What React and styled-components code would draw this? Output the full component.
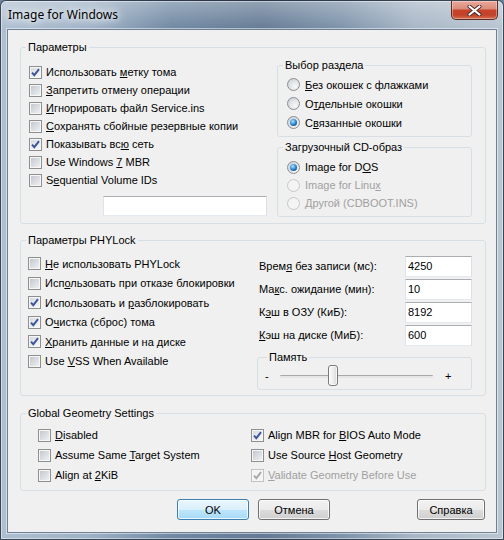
import React from "react";
import styled, { createGlobalStyle } from "styled-components";

const GlobalStyle = createGlobalStyle`
  html, body {
    margin: 0;
    padding: 0;
    background: #70859d;
  }
  body {
    font-family: "Liberation Sans", Arial, sans-serif;
    font-size: 11px;
    color: #000;
  }
`;

const Window = styled.div`
  width: 504px;
  height: 540px;
  box-sizing: border-box;
  display: flex;
  flex-direction: column;
  border: 1px solid rgba(28, 38, 52, 0.8);
  border-radius: 6px 6px 0 0;
  overflow: hidden;
  background:
    linear-gradient(180deg, rgba(255, 255, 255, 0.3) 0, rgba(255, 255, 255, 0) 28px),
    linear-gradient(90deg, #aebfd2 0%, #9db1c6 18%, #7189a3 34%, #657b95 52%, #7e94ab 68%, #a7b6c6 82%, #b9c5d2 100%);
  box-shadow: inset 0 0 0 1px rgba(255, 255, 255, 0.45);
`;

const TitleBar = styled.div`
  flex: none;
  height: 28px;
  display: flex;
  align-items: flex-start;
  justify-content: space-between;
  padding: 0 5px 0 7px;
`;

const Title = styled.div`
  margin-top: 6px;
  font-family: "Noto Sans", "Open Sans", sans-serif;
  font-size: 12px;
  line-height: 16px;
  color: #000;
  text-shadow: 0 0 6px #fff, 0 0 12px #fff, 0 0 18px rgba(255, 255, 255, 0.8);
`;

const CloseButton = styled.div`
  width: 47px;
  height: 19px;
  box-sizing: border-box;
  border: 1px solid #5c2d27;
  border-top: none;
  border-radius: 0 0 5px 5px;
  background: linear-gradient(#e9a99b 0%, #dc8c7b 42%, #c7432b 52%, #c24229 78%, #d56d50 100%);
  box-shadow: inset 0 0 0 1px rgba(255, 255, 255, 0.35);
  display: flex;
  align-items: center;
  justify-content: center;
`;

const Client = styled.div`
  flex: 1;
  margin: 0 6px 6px;
  display: flex;
  flex-direction: column;
  padding: 0 10px 0 12px;
  background: #f0f0f0;
  border: 1px solid #6f8094;
  box-shadow: 0 0 0 1px rgba(255, 255, 255, 0.5);
`;

const Group = styled.fieldset`
  margin: ${p => p.$mt || 0}px 0 0;
  padding: 0;
  min-width: 0;
  box-sizing: border-box;
  border: 1px solid #d5dfe5;
  border-radius: 3px;
`;

const Legend = styled.legend`
  margin-left: ${p => p.$indent ?? 5}px;
  padding: 0 2px;
  line-height: 13px;
`;

const ParamsBody = styled.div`
  display: flex;
  justify-content: space-between;
  padding: 5px 13px 6px 8px;
`;

const Column = styled.div`
  display: flex;
  flex-direction: column;
  padding-top: ${p => p.$pt || 0}px;
  gap: ${p => p.$gap || 0}px;
  width: ${p => (p.$w ? `${p.$w}px` : "auto")};
`;

const RadioBody = styled.div`
  display: flex;
  flex-direction: column;
  padding: ${p => p.$pad};
`;

const Option = styled.div`
  display: flex;
  align-items: center;
  gap: ${p => p.$gap}px;
  height: ${p => p.$h}px;
  white-space: nowrap;
  color: ${p => (p.$disabled ? "#a0a0a0" : "#000")};
`;

const Box = styled.span`
  position: relative;
  flex: none;
  width: 13px;
  height: 13px;
  box-sizing: border-box;
  border: 1px solid ${p => (p.$disabled ? "#c2c2c2" : "#8e8f8f")};
  background: #f6f6f6;
  display: flex;
  align-items: center;
  justify-content: center;

  &::before {
    content: "";
    position: absolute;
    inset: 1px;
    background: ${p =>
      p.$disabled
        ? "#f4f4f4"
        : p.$checked
        ? "linear-gradient(135deg, #d6dae0 0%, #f6f7f8 100%)"
        : "linear-gradient(135deg, #c4c8ce 0%, #eef0f2 100%)"};
  }

  svg {
    position: relative;
  }
`;

const Round = styled.span`
  position: relative;
  flex: none;
  width: 13px;
  height: 13px;
  box-sizing: border-box;
  border-radius: 50%;
  border: 1px solid ${p => (p.$disabled ? "#c8c8c8" : "#8b8e92")};
  background: ${p =>
    p.$disabled
      ? "#f4f4f4"
      : "radial-gradient(circle at 65% 70%, #f8f8f8 0%, #e4e6e9 45%, #c4c8cd 100%)"};

  &::after {
    content: "";
    display: ${p => (p.$checked ? "block" : "none")};
    position: absolute;
    inset: 2px;
    border-radius: 50%;
    background: radial-gradient(circle at 40% 35%, #b9e4ff 0%, #4aa3e6 35%, #165e9f 70%, #0c3f73 100%);
  }
`;

const TextBox = styled.input`
  box-sizing: border-box;
  width: ${p => p.$w}px;
  height: ${p => p.$h}px;
  margin: 0;
  padding: 0 2px;
  border: 1px solid;
  border-color: #abadb3 #dbdfe6 #e3e9ef #e2e3ea;
  background: #fff;
  font: inherit;
  color: #000;
  outline: none;
`;

const VolumeLabel = styled(TextBox)`
  margin: 7px 0 0 74px;
`;

const PhyBody = styled.div`
  display: flex;
  justify-content: space-between;
  padding: 7px 13px 5px 7px;
`;

const FieldRow = styled.div`
  display: flex;
  align-items: center;
  justify-content: space-between;
  height: 21px;
  padding-left: 2px;
`;

const SliderRow = styled.div`
  display: flex;
  align-items: center;
  height: 23px;
  padding: 1px 0 1px 7px;
`;

const Sign = styled.span`
  width: ${p => p.$w}px;
  margin-left: ${p => p.$ml || 0}px;
  line-height: 13px;
`;

const Track = styled.div`
  position: relative;
  width: 153px;
  height: 2px;
  border-top: 1px solid #a9a9a9;
  background: #e6e6e6;
  border-radius: 1px;
`;

const Thumb = styled.span`
  position: absolute;
  top: -11px;
  width: 10px;
  height: 21px;
  box-sizing: border-box;
  border: 1px solid #7a7a7a;
  border-radius: 3px;
  background: linear-gradient(90deg, #fbfbfb 0%, #eeeeee 50%, #d8d8d8 100%);
  box-shadow: inset 0 0 0 1px rgba(255, 255, 255, 0.7);
`;

const GeometryBody = styled.div`
  display: flex;
  padding: 5px 0 5px 17px;
`;

const ButtonRow = styled.div`
  display: flex;
  gap: 9px;
  margin-top: 8px;
  padding: 0 1px 0 157px;
`;

const Button = styled.button`
  box-sizing: border-box;
  width: ${p => p.$w}px;
  height: 21px;
  margin: 0 0 0 ${p => (p.$push ? "auto" : "0")};
  padding: 0;
  font: inherit;
  color: #000;
  border: 1px solid ${p => (p.$primary ? "#3c7fb1" : "#707070")};
  border-radius: 3px;
  background: ${p =>
    p.$primary
      ? "linear-gradient(#eaf6fd 0%, #d9f0fc 50%, #bee6fd 51%, #a7d9f5 100%)"
      : "linear-gradient(#f2f2f2 0%, #ebebeb 50%, #dddddd 51%, #cfcfcf 100%)"};
  box-shadow: inset 0 0 0 1px rgba(255, 255, 255, 0.75);
`;

// "&" marks the access key, as in a Windows resource string
const Accel = ({ text }) => {
  const i = text.indexOf("&");
  if (i < 0) return text;
  return (
    <>
      {text.slice(0, i)}
      <u>{text[i + 1]}</u>
      {text.slice(i + 2)}
    </>
  );
};

const CheckBox = ({ label, checked, disabled, h }) => (
  <Option $gap={4} $h={h} $disabled={disabled}>
    <Box $checked={checked} $disabled={disabled}>
      {checked && (
        <svg width="9" height="9" viewBox="0 0 9 9">
          <path
            d="M1 4.6 L3.3 7.2 L8 1.2"
            fill="none"
            stroke={disabled ? "#a9a9a9" : "#3b5597"}
            strokeWidth="1.9"
          />
        </svg>
      )}
    </Box>
    <span>
      <Accel text={label} />
    </span>
  </Option>
);

const RadioButton = ({ label, checked, disabled, h }) => (
  <Option $gap={5} $h={h} $disabled={disabled}>
    <Round $checked={checked} $disabled={disabled} />
    <span>
      <Accel text={label} />
    </span>
  </Option>
);

const general = [
  ["Использовать &метку тома", true],
  ["&Запретить отмену операции", false],
  ["&Игнорировать файл Service.ins", false],
  ["&Сохранять сбойные резервные копии", false],
  ["Показывать вс&ю сеть", true],
  ["Use Windows &7 MBR", false],
  ["S&equential Volume IDs", false],
];

const partitionView = [
  ["&Без окошек с флажками", false],
  ["О&тдельные окошки", false],
  ["С&вязанные окошки", true],
];

const bootImage = [
  ["Image for D&OS", true, false],
  ["Image for Linu&x", false, true],
  ["&Другой (CDBOOT.INS)", false, true],
];

const phylock = [
  ["&Не использовать PHYLock", false],
  ["Исп&ользовать при отказе блокировки", false],
  ["Использовать и &разблокировать", true],
  ["О&чистка (сброс) тома", true],
  ["&Хранить данные и на диске", true],
  ["Use &VSS When Available", false],
];

const fields = [
  ["Врем&я без записи (мс):", "4250"],
  ["Ма&кс. ожидание (мин):", "10"],
  ["К&эш в ОЗУ (КиБ):", "8192"],
  ["&Кэш на диске (МиБ):", "600"],
];

const geometryLeft = [
  ["&Disabled", false, false],
  ["Assume Same &Target System", false, false],
  ["Align at &2KiB", false, false],
];

const geometryRight = [
  ["Align MBR for &BIOS Auto Mode", true, false],
  ["Use Source &Host Geometry", false, false],
  ["&Validate Geometry Before Use", true, true],
];

const memory = { value: 5, max: 15 };

const MemorySlider = ({ value, max }) => {
  const left = Math.round((value / max) * (153 - 10));
  return (
    <SliderRow>
      <Sign $w={15}>-</Sign>
      <Track>
        <Thumb style={{ left }} />
      </Track>
      <Sign $w={12} $ml={12}>+</Sign>
    </SliderRow>
  );
};

export default function App() {
  return (
    <>
      <GlobalStyle />
      <Window>
        <TitleBar>
          <Title>Image for Windows</Title>
          <CloseButton>
            <svg width="15" height="11" viewBox="0 0 15 11">
              <path d="M2.5 1.5 L12.5 9.5 M12.5 1.5 L2.5 9.5" stroke="#4a2a26" strokeWidth="4" strokeLinecap="round" />
              <path d="M2.5 1.5 L12.5 9.5 M12.5 1.5 L2.5 9.5" stroke="#fff" strokeWidth="2.2" strokeLinecap="round" />
            </svg>
          </CloseButton>
        </TitleBar>

        <Client>
          <Group $mt={11}>
            <Legend>Параметры</Legend>
            <ParamsBody>
              <Column $pt={4}>
                {general.map(([label, checked]) => (
                  <CheckBox key={label} label={label} checked={checked} h={18} />
                ))}
                <VolumeLabel $w={164} $h={20} readOnly value="" />
              </Column>
              <Column $w={195} $gap={4}>
                <Group>
                  <Legend>Выбор раздела</Legend>
                  <RadioBody $pad="3px 0 4px 9px">
                    {partitionView.map(([label, checked]) => (
                      <RadioButton key={label} label={label} checked={checked} h={19} />
                    ))}
                  </RadioBody>
                </Group>
                <Group>
                  <Legend>Загрузочный CD-образ</Legend>
                  <RadioBody $pad="4px 0 4px 9px">
                    {bootImage.map(([label, checked, disabled]) => (
                      <RadioButton key={label} label={label} checked={checked} disabled={disabled} h={18} />
                    ))}
                  </RadioBody>
                </Group>
              </Column>
            </ParamsBody>
          </Group>

          <Group $mt={10}>
            <Legend>Параметры PHYLock</Legend>
            <PhyBody>
              <Column>
                {phylock.map(([label, checked]) => (
                  <CheckBox key={label} label={label} checked={checked} h={19.5} />
                ))}
              </Column>
              <Column $w={215} $pt={1.5} $gap={2}>
                {fields.map(([label, value]) => (
                  <FieldRow key={label}>
                    <span>
                      <Accel text={label} />
                    </span>
                    <TextBox $w={67} $h={21} readOnly value={value} />
                  </FieldRow>
                ))}
                <Group $mt={3.5}>
                  <Legend $indent={9}>Память</Legend>
                  <MemorySlider value={memory.value} max={memory.max} />
                </Group>
              </Column>
            </PhyBody>
          </Group>

          <Group $mt={11}>
            <Legend>Global Geometry Settings</Legend>
            <GeometryBody>
              <Column $w={213}>
                {geometryLeft.map(([label, checked, disabled]) => (
                  <CheckBox key={label} label={label} checked={checked} disabled={disabled} h={20} />
                ))}
              </Column>
              <Column>
                {geometryRight.map(([label, checked, disabled]) => (
                  <CheckBox key={label} label={label} checked={checked} disabled={disabled} h={20} />
                ))}
              </Column>
            </GeometryBody>
          </Group>

          <ButtonRow>
            <Button $w={72} $primary>OK</Button>
            <Button $w={72}>Отмена</Button>
            <Button $w={68} $push>Справка</Button>
          </ButtonRow>
        </Client>
      </Window>
    </>
  );
}
